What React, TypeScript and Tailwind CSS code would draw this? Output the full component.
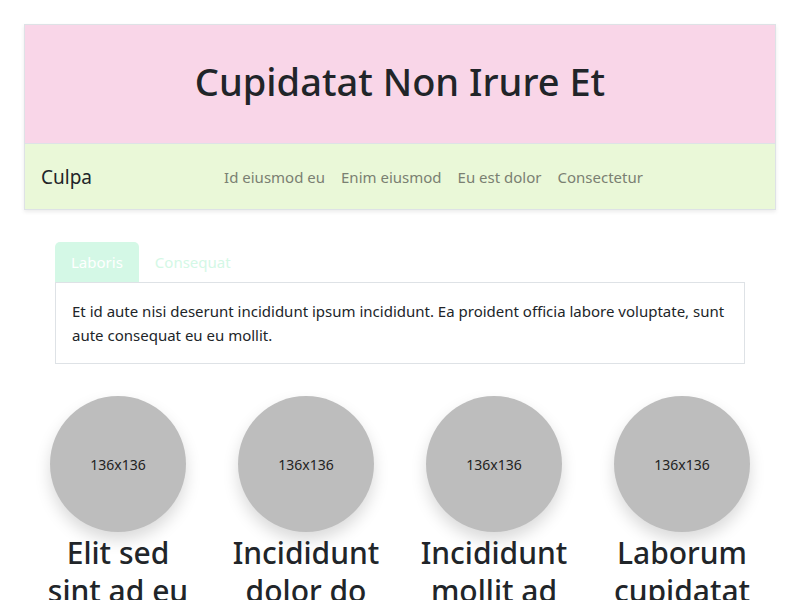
import React from "react";

const items = [
  "Elit sed sint ad eu",
  "Incididunt dolor do",
  "Incididunt mollit ad",
  "Laborum cupidatat",
];

export default function App() {
  return (
    <div
      className="min-h-[600px] bg-white text-[#212529]"
      style={{ fontFamily: '"Segoe UI", "Noto Sans", sans-serif' }}
    >
      <div className="pt-6 px-6">
        <div className="border border-[#dee2e6] shadow-[0_2px_4px_rgba(0,0,0,0.08)]">
          <div className="h-[119px] bg-[#f9d6e8] flex items-center justify-center border-b border-[#dee2e6]">
            <h1 className="text-[38px] font-medium leading-[1.2] text-[#212529] pb-[4px]">
              Cupidatat Non Irure Et
            </h1>
          </div>
          <div className="h-[65px] bg-[#eaf8d8] flex items-center px-4 pt-[2px]">
            <span className="text-[19px] text-[#212529] mr-4">Culpa</span>
            <nav className="flex-1 flex justify-center text-[15px] text-[#7a8072]">
              <a className="px-2">Id eiusmod eu</a>
              <a className="px-2">Enim eiusmod</a>
              <a className="px-2">Eu est dolor</a>
              <a className="px-2">Consectetur</a>
            </nav>
          </div>
        </div>
      </div>

      <div className="mt-8 mx-[55px]">
        <div className="flex">
          <div className="h-10 px-4 flex items-center bg-[#d4f8e6] rounded-t-[5px] text-white text-[15px]">
            Laboris
          </div>
          <div className="h-10 px-4 flex items-center text-[#d4f8e6] text-[15px]">
            Consequat
          </div>
        </div>
        <div className="border border-[#dee2e6] p-4 text-[15px] leading-6 text-[#212529]">
          Et id aute nisi deserunt incididunt ipsum incididunt. Ea proident officia labore voluptate, sunt aute consequat eu eu mollit.
        </div>
      </div>

      <div className="mt-8 mx-6 grid grid-cols-4">
        {items.map((t, i) => (
          <div key={i} className="flex flex-col items-center px-4">
            <div className="w-[136px] h-[136px] rounded-full bg-[#bdbdbd] flex items-center justify-center text-[14px] text-[#222] shadow-[0_8px_16px_rgba(0,0,0,0.15)]">
              136x136
            </div>
            <h2 className="mt-[2px] text-[30px] font-medium leading-[1.25] text-center text-[#212529]">
              {t}
            </h2>
          </div>
        ))}
      </div>
    </div>
  );
}
